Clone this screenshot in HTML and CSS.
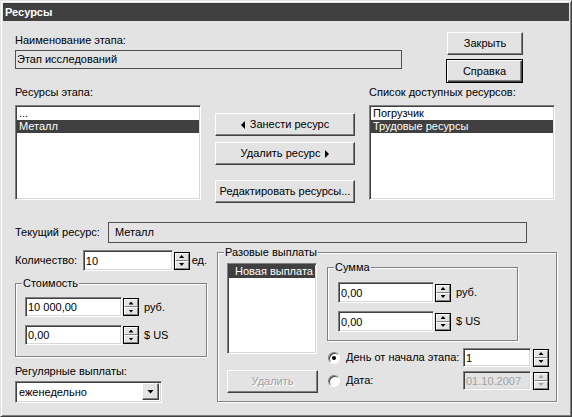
FILE: index.html
```html
<!DOCTYPE html>
<html>
<head>
<meta charset="utf-8">
<title>Ресурсы</title>
<link rel="stylesheet" href="styles.css">
</head>
<body>
<div class="window">
  <div class="titlebar">Ресурсы</div>
  <div class="content">

    <div class="row-top">
      <div class="name-col">
        <div class="label">Наименование этапа:</div>
        <div class="field-ro name-field">Этап исследований</div>
      </div>
      <div class="btn-col">
        <div class="btn btn-close">Закрыть</div>
        <div class="btn btn-default">Справка</div>
      </div>
    </div>

    <div class="row-lists">
      <div class="list-col">
        <div class="label">Ресурсы этапа:</div>
        <div class="listbox big-list">
          <div class="item">...</div>
          <div class="item selected">Металл</div>
        </div>
      </div>
      <div class="mid-col">
        <div class="btn wide add-btn"><span class="tri-left"></span>Занести ресурс</div>
        <div class="btn wide remove-btn">Удалить ресурс<span class="tri-right"></span></div>
        <div class="btn wide edit-btn">Редактировать ресурсы...</div>
      </div>
      <div class="list-col right-list">
        <div class="label">Список доступных ресурсов:</div>
        <div class="listbox big-list">
          <div class="item">Погрузчик</div>
          <div class="item selected">Трудовые ресурсы</div>
        </div>
      </div>
    </div>

    <div class="row-current">
      <div class="label current-label">Текущий ресурс:</div>
      <div class="field-ro current-field">Металл</div>
    </div>

    <div class="row-bottom">
      <div class="left-col">
        <div class="qty-row">
          <div class="label qty-label">Количество:</div>
          <div class="input qty-input">10</div>
          <div class="spin"><span><i class="up"></i></span><span><i class="down"></i></span></div>
          <div class="unit unit-qty">ед.</div>
        </div>

        <div class="group cost-group">
          <span class="legend">Стоимость</span>
          <div class="money-row">
            <div class="input cost-input">10 000,00</div>
            <div class="spin"><span><i class="up"></i></span><span><i class="down"></i></span></div>
            <div class="unit">руб.</div>
          </div>
          <div class="money-row second">
            <div class="input cost-input">0,00</div>
            <div class="spin"><span><i class="up"></i></span><span><i class="down"></i></span></div>
            <div class="unit">$ US</div>
          </div>
        </div>

        <div class="label regular-label">Регулярные выплаты:</div>
        <div class="combo">
          <div class="combo-text">еженедельно</div>
          <div class="combo-btn"><i class="down-big"></i></div>
        </div>
      </div>

      <div class="group pay-group">
        <span class="legend">Разовые выплаты</span>
        <div class="pay-inner">
          <div class="pay-col1">
            <div class="listbox pay-list">
              <div class="item selected">Новая выплата</div>
            </div>
            <div class="btn disabled del-btn">Удалить</div>
          </div>
          <div class="pay-col2">
            <div class="group sum-group">
              <span class="legend">Сумма</span>
              <div class="money-row">
                <div class="input sum-input">0,00</div>
                <div class="spin"><span><i class="up"></i></span><span><i class="down"></i></span></div>
                <div class="unit">руб.</div>
              </div>
              <div class="money-row second">
                <div class="input sum-input">0,00</div>
                <div class="spin"><span><i class="up"></i></span><span><i class="down"></i></span></div>
                <div class="unit">$ US</div>
              </div>
            </div>
            <div class="radio-row first">
              <span class="radio checked"></span>
              <span class="radio-label">День от начала этапа:</span>
              <div class="input small-input">1</div>
              <div class="spin"><span><i class="up"></i></span><span><i class="down"></i></span></div>
            </div>
            <div class="radio-row">
              <span class="radio"></span>
              <span class="radio-label">Дата:</span>
              <div class="input small-input dis">01.10.2007</div>
              <div class="spin dis"><span><i class="up"></i></span><span><i class="down"></i></span></div>
            </div>
          </div>
        </div>
      </div>
    </div>

  </div>
</div>
</body>
</html>
```

FILE: styles.css
```css
* { box-sizing: border-box; }
html, body { margin: 0; padding: 0; }
body {
  width: 572px;
  height: 417px;
  overflow: hidden;
  background: #e3e3e3;
  font-family: "Liberation Sans", Arial, sans-serif;
  font-size: 11px;
  color: #000;
}

.window {
  width: 572px;
  height: 417px;
  background: #e3e3e3;
  border: 1px solid;
  border-color: #e3e3e3 #404040 #404040 #e3e3e3;
  box-shadow: inset 1px 1px 0 #fff, inset -1px -1px 0 #808080;
  padding: 2px 2px 0 2px;
}

.titlebar {
  height: 18px;
  background: #404040;
  color: #fff;
  font-weight: bold;
  font-size: 11px;
  line-height: 18px;
  padding-left: 2px;
}

.content {
  padding-left: 12px;
}

.label {
  line-height: 13px;
  white-space: nowrap;
}

/* ---------- generic widgets ---------- */
.btn {
  display: flex;
  align-items: center;
  justify-content: center;
  background: #e3e3e3;
  border: 1px solid;
  border-color: #fff #404040 #404040 #fff;
  box-shadow: inset -1px -1px 0 #808080;
  white-space: nowrap;
  line-height: 13px;
}
.btn-default {
  border: 1px solid #000;
  box-shadow: inset 1px 1px 0 #fff, inset -1px -1px 0 #404040, inset -2px -2px 0 #808080;
}
.btn.disabled {
  color: #a0a0a0;
  text-shadow: 1px 1px 0 #fff;
}

.field-ro {
  background: #e3e3e3;
  border: 1px solid #505050;
  line-height: 17px;
  white-space: nowrap;
}

.input {
  background: #fff;
  border: 1px solid;
  border-color: #808080 #fff #fff #808080;
  box-shadow: inset 1px 1px 0 #404040, inset -1px -1px 0 #d8d8d8;
  padding: 0 2px 0 2px;
  display: flex;
  align-items: center;
  white-space: nowrap;
}
.input.dis {
  background: #e3e3e3;
  color: #a0a0a0;
}

.listbox {
  background: #fff;
  border: 1px solid;
  border-color: #808080 #fff #fff #808080;
  box-shadow: inset 1px 1px 0 #404040, inset -1px -1px 0 #d8d8d8;
  padding: 1px;
}
.item {
  line-height: 13px;
  height: 13px;
  padding-left: 2px;
  white-space: nowrap;
}
.item.selected {
  background: #404040;
  color: #fff;
}

.spin {
  width: 16px;
  height: 18px;
  border: 1px solid #000;
  display: flex;
  flex-direction: column;
  flex: none;
}
.spin > span {
  flex: 1;
  display: flex;
  align-items: center;
  justify-content: center;
  background: #e3e3e3;
  border: 1px solid;
  border-color: #fff #808080 #808080 #fff;
}
.spin i {
  display: block;
  width: 5px;
  height: 3px;
  background: #000;
}
.spin i.up { clip-path: polygon(50% 0, 100% 100%, 0 100%); }
.spin i.down { clip-path: polygon(0 0, 100% 0, 50% 100%); }
.spin.dis i { background: #a0a0a0; }

.unit {
  line-height: 13px;
  white-space: nowrap;
}

.group {
  position: relative;
  border: 1px solid #808080;
  box-shadow: inset 1px 1px 0 #fff, 1px 1px 0 #fff;
}
.legend {
  position: absolute;
  top: -7px;
  left: 6px;
  padding: 0 1px;
  background: #e3e3e3;
  line-height: 13px;
  white-space: nowrap;
}

.tri-left {
  display: inline-block;
  width: 0;
  height: 0;
  border-top: 4px solid transparent;
  border-bottom: 4px solid transparent;
  border-right: 4px solid #000;
  margin-right: 5px;
}
.tri-right {
  display: inline-block;
  width: 0;
  height: 0;
  border-top: 4px solid transparent;
  border-bottom: 4px solid transparent;
  border-left: 4px solid #000;
  margin-left: 5px;
}

/* ---------- top row ---------- */
.row-top {
  display: flex;
  margin-top: 11px;
}
.name-col {
  width: 387px;
  padding-top: 2px;
}
.name-field {
  margin-top: 3px;
  height: 19px;
  padding-left: 1px;
}
.btn-col {
  margin-left: 44px;
  display: flex;
  flex-direction: column;
  gap: 4px;
}
.btn-close {
  width: 76px;
  height: 23px;
  margin-left: 1px;
}
.btn-default {
  width: 77px;
  height: 24px;
}

/* ---------- lists row ---------- */
.row-lists {
  display: flex;
  margin-top: 3px;
}
.list-col {
  width: 186px;
}
.big-list {
  margin-top: 6px;
  height: 95px;
}
.mid-col {
  width: 140px;
  margin-left: 14px;
  padding-top: 27px;
  display: flex;
  flex-direction: column;
}
.mid-col .btn {
  height: 23px;
}
.mid-col .remove-btn { margin-top: 6px; }
.mid-col .edit-btn { margin-top: 15px; }
.right-list {
  margin-left: 14px;
}

/* ---------- current resource ---------- */
.row-current {
  display: flex;
  align-items: center;
  margin-top: 19px;
}
.current-label {
  width: 93px;
}
.current-field {
  width: 419px;
  height: 21px;
  line-height: 19px;
  padding-left: 6px;
}

/* ---------- bottom ---------- */
.row-bottom {
  display: flex;
  margin-top: 7px;
}
.left-col {
  width: 192px;
}
.qty-row {
  display: flex;
  align-items: center;
  height: 21px;
}
.qty-label {
  width: 68px;
}
.qty-input {
  width: 90px;
  height: 21px;
}
.qty-row .spin { margin-left: 1px; }
.unit-qty { margin-left: 2px; }

.cost-group {
  margin-top: 12px;
  height: 74px;
  padding: 13px 0 0 9px;
}
.money-row {
  display: flex;
  align-items: center;
}
.money-row.second { margin-top: 8px; }
.money-row .spin { margin-left: 1px; }
.money-row .unit { margin-left: 5px; }
.cost-input {
  width: 97px;
  height: 20px;
}

.regular-label {
  margin-top: 8px;
}
.combo {
  margin-top: 3px;
  width: 147px;
  height: 22px;
  background: #fff;
  border: 1px solid;
  border-color: #808080 #fff #fff #808080;
  box-shadow: inset 1px 1px 0 #404040, inset -1px -1px 0 #d8d8d8;
  padding: 1px;
  display: flex;
}
.combo-text {
  flex: 1;
  padding-left: 2px;
  line-height: 18px;
}
.combo-btn {
  width: 17px;
  height: 17px;
  margin-right: 1px;
  background: #e3e3e3;
  border: 1px solid;
  border-color: #fff #404040 #404040 #fff;
  box-shadow: inset -1px -1px 0 #808080;
  display: flex;
  align-items: center;
  justify-content: center;
}
.down-big {
  display: block;
  width: 7px;
  height: 4px;
  background: #000;
  clip-path: polygon(0 0, 100% 0, 50% 100%);
}

.pay-group {
  margin-left: 10px;
  margin-top: 2px;
  width: 340px;
  height: 150px;
  padding: 10px 0 0 9px;
}
.pay-inner {
  display: flex;
}
.pay-col1 {
  width: 91px;
}
.pay-list {
  width: 90px;
  height: 91px;
}
.pay-list .item {
  padding-left: 6px;
}
.del-btn {
  margin-top: 16px;
  width: 91px;
  height: 23px;
}
.pay-col2 {
  margin-left: 9px;
  padding-top: 4px;
}
.sum-group {
  width: 191px;
  height: 74px;
  padding: 14px 0 0 10px;
}
.sum-input {
  width: 96px;
  height: 21px;
}

.radio-row {
  display: flex;
  align-items: center;
  height: 19px;
}
.radio-row.first { margin-top: 7px; }
.radio-row + .radio-row { margin-top: 4px; }
.radio {
  position: relative;
  width: 12px;
  height: 12px;
  margin-left: 1px;
  border-radius: 50%;
  background: #fff;
  border: 1px solid;
  border-color: #808080 #fff #fff #808080;
  box-shadow: inset 1px 1px 0 #404040;
  flex: none;
}
.radio.checked::after {
  content: "";
  position: absolute;
  left: 3px;
  top: 3px;
  width: 4px;
  height: 4px;
  border-radius: 50%;
  background: #000;
}
.radio-label {
  width: 117px;
  margin-left: 6px;
  line-height: 13px;
  white-space: nowrap;
}
.small-input {
  width: 68px;
  height: 19px;
}
.radio-row .spin { margin-left: 2px; }
```
